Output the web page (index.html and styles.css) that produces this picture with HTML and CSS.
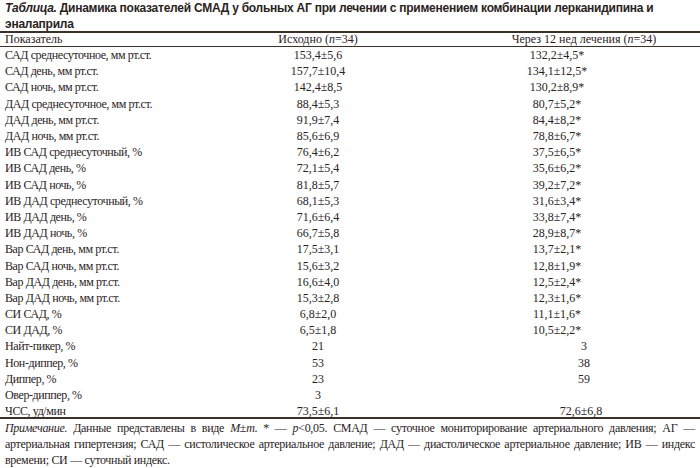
FILE: index.html
```html
<!DOCTYPE html>
<html lang="ru">
<head>
<meta charset="utf-8">
<link rel="stylesheet" href="styles.css">
</head>
<body>
<div class="page">
  <h1 class="title"><em>Таблица.</em> Динамика показателей СМАД у больных АГ при лечении с применением комбинации лерканидипина и эналаприла</h1>
  <table class="data">
    <thead>
      <tr><th class="c1">Показатель</th><th class="c2">Исходно (<i>n</i>=34)</th><th class="c3">Через 12 нед лечения (<i>n</i>=34)</th></tr>
    </thead>
    <tbody>
      <tr><td class="c1">САД среднесуточное, мм рт.ст.</td><td class="c2">153,4±5,6</td><td class="c3"><span class="sig">132,2±4,5*</span></td></tr>
      <tr><td class="c1">САД день, мм рт.ст.</td><td class="c2">157,7±10,4</td><td class="c3"><span class="sig">134,1±12,5*</span></td></tr>
      <tr><td class="c1">САД ночь, мм рт.ст.</td><td class="c2">142,4±8,5</td><td class="c3"><span class="sig">130,2±8,9*</span></td></tr>
      <tr><td class="c1">ДАД среднесуточное, мм рт.ст.</td><td class="c2">88,4±5,3</td><td class="c3"><span class="sig">80,7±5,2*</span></td></tr>
      <tr><td class="c1">ДАД день, мм рт.ст.</td><td class="c2">91,9±7,4</td><td class="c3"><span class="sig">84,4±8,2*</span></td></tr>
      <tr><td class="c1">ДАД ночь, мм рт.ст.</td><td class="c2">85,6±6,9</td><td class="c3"><span class="sig">78,8±6,7*</span></td></tr>
      <tr><td class="c1">ИВ САД среднесуточный, %</td><td class="c2">76,4±6,2</td><td class="c3"><span class="sig">37,5±6,5*</span></td></tr>
      <tr><td class="c1">ИВ САД день, %</td><td class="c2">72,1±5,4</td><td class="c3"><span class="sig">35,6±6,2*</span></td></tr>
      <tr><td class="c1">ИВ САД ночь, %</td><td class="c2">81,8±5,7</td><td class="c3"><span class="sig">39,2±7,2*</span></td></tr>
      <tr><td class="c1">ИВ ДАД среднесуточный, %</td><td class="c2">68,1±5,3</td><td class="c3"><span class="sig">31,6±3,4*</span></td></tr>
      <tr><td class="c1">ИВ ДАД день, %</td><td class="c2">71,6±6,4</td><td class="c3"><span class="sig">33,8±7,4*</span></td></tr>
      <tr><td class="c1">ИВ ДАД ночь, %</td><td class="c2">66,7±5,8</td><td class="c3"><span class="sig">28,9±8,7*</span></td></tr>
      <tr><td class="c1">Вар САД день, мм рт.ст.</td><td class="c2">17,5±3,1</td><td class="c3"><span class="sig">13,7±2,1*</span></td></tr>
      <tr><td class="c1">Вар САД ночь, мм рт.ст.</td><td class="c2">15,6±3,2</td><td class="c3"><span class="sig">12,8±1,9*</span></td></tr>
      <tr><td class="c1">Вар ДАД день, мм рт.ст.</td><td class="c2">16,6±4,0</td><td class="c3"><span class="sig">12,5±2,4*</span></td></tr>
      <tr><td class="c1">Вар ДАД ночь, мм рт.ст.</td><td class="c2">15,3±2,8</td><td class="c3"><span class="sig">12,3±1,6*</span></td></tr>
      <tr><td class="c1">СИ САД, %</td><td class="c2">6,8±2,0</td><td class="c3"><span class="sig">11,1±1,6*</span></td></tr>
      <tr><td class="c1">СИ ДАД, %</td><td class="c2">6,5±1,8</td><td class="c3"><span class="sig">10,5±2,2*</span></td></tr>
      <tr><td class="c1">Найт-пикер, %</td><td class="c2">21</td><td class="c3">3</td></tr>
      <tr><td class="c1">Нон-диппер, %</td><td class="c2">53</td><td class="c3">38</td></tr>
      <tr><td class="c1">Диппер, %</td><td class="c2">23</td><td class="c3">59</td></tr>
      <tr><td class="c1">Овер-диппер, %</td><td class="c2">3</td><td class="c3"></td></tr>
      <tr class="last"><td class="c1">ЧСС, уд/мин</td><td class="c2">73,5±6,1</td><td class="c3"><span class="hr">72,6±6,8</span></td></tr>
    </tbody>
  </table>
  <p class="note"><span class="line"><i>Примечание.</i> Данные представлены в виде <i>M</i>±<i>m</i>. * — <i>p</i>&lt;0,05. СМАД — суточное мониторирование артериального давления; АГ —</span> <span class="line">артериальная гипертензия; САД — систолическое артериальное давление; ДАД — диастолическое артериальное давление; ИВ — индекс</span> <span class="end">времени; СИ — суточный индекс.</span></p>
</div>
</body>
</html>
```

FILE: styles.css
```css
html, body {
  margin: 0;
  padding: 0;
  background: #ffffff;
}

.page {
  width: 700px;
  color: #2a231d;
  font-family: "Liberation Serif", "Times New Roman", "DejaVu Serif", serif;
  font-size: 12px;
}

.title {
  margin: 0;
  padding: 0 5px;
  height: 31px;
  font-family: "Liberation Sans", Arial, sans-serif;
  font-size: 12px;
  letter-spacing: -0.25px;
  font-weight: bold;
  line-height: 16px;
  color: #2a231d;
}

.title em {
  font-style: italic;
}

.data {
  width: 700px;
  border-collapse: collapse;
  table-layout: fixed;
  font-family: "Liberation Serif", "Times New Roman", "DejaVu Serif", serif;
  font-size: 12px;
  color: #2a231d;
  border-top: 2px solid #3a3129;
  border-bottom: 2px solid #3a3129;
}

.data th,
.data td {
  padding: 0 5px;
  font-weight: normal;
  white-space: nowrap;
}

.data thead th {
  height: 13px;
  line-height: 13px;
  border-bottom: 1px solid #3a3129;
}

.data tbody td {
  height: 16.2px;
  line-height: 16px;
}

.data tbody tr.last td {
  height: 13px;
  line-height: 12px;
  padding-top: 1px;
}

.c1 {
  width: 158px;
  text-align: left;
}

td.c1 {
  letter-spacing: -0.4px;
}

.c2 {
  width: 290px;
  text-align: center;
}

.c3 {
  text-align: center;
}

.sig {
  display: inline-block;
  margin-right: 54px;
}

.hr {
  display: inline-block;
  margin-right: 6px;
}

.note {
  margin: 0;
  padding: 1px 5px 0;
  font-family: "Liberation Serif", "Times New Roman", "DejaVu Serif", serif;
  font-size: 12px;
  line-height: 16px;
  letter-spacing: -0.3px;
}

.note .line {
  display: block;
  text-align: justify;
  text-align-last: justify;
  white-space: nowrap;
}

.note .end {
  display: block;
}
```
